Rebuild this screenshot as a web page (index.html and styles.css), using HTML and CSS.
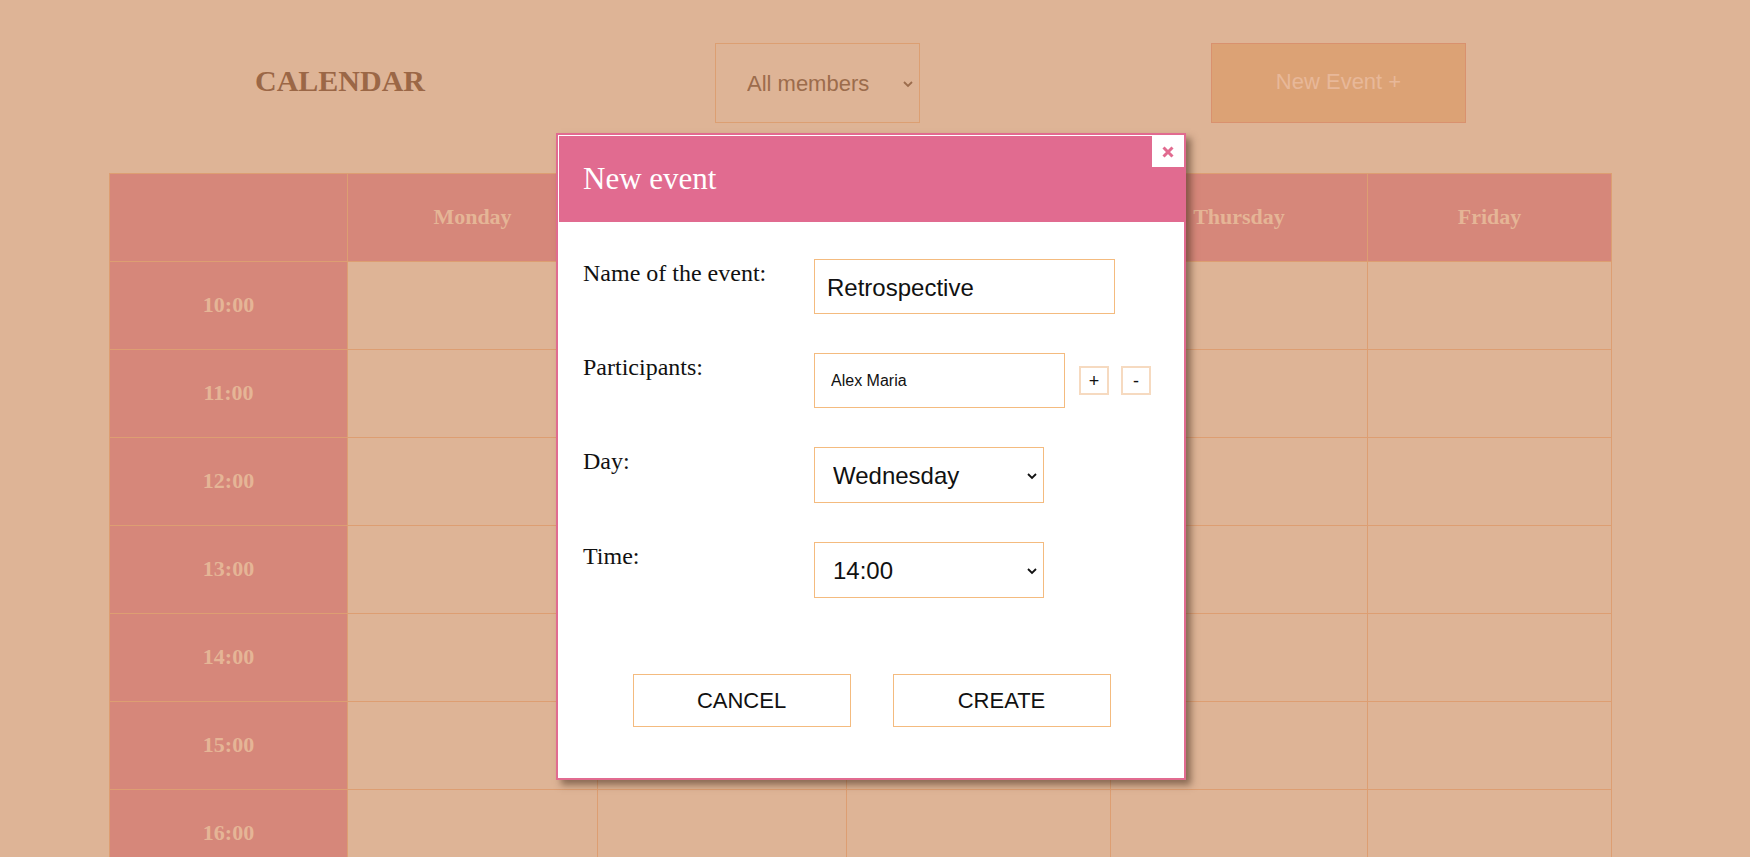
FILE: index.html
```html
<!DOCTYPE html>
<html lang="en">
<head>
<meta charset="utf-8">
<title>Calendar</title>
<link rel="stylesheet" href="styles.css">
</head>
<body>
<header class="topbar">
  <h1 class="title">CALENDAR</h1>
  <div class="select-wrap">
    <select class="member-select"><option>All members</option></select>
    <svg class="chevron chevron-brown" width="10" height="7" viewBox="0 0 10 7"><polyline points="1,1 5,5 9,1" fill="none" stroke="#9c6c4c" stroke-width="1.8"/></svg>
  </div>
  <button class="new-event-btn" type="button">New Event +</button>
</header>

<div class="calendar">
  <div class="cell head"></div>
  <div class="cell head">Monday</div>
  <div class="cell head">Tuesday</div>
  <div class="cell head">Wednesday</div>
  <div class="cell head">Thursday</div>
  <div class="cell head">Friday</div>

  <div class="cell time">10:00</div><div class="cell"></div><div class="cell"></div><div class="cell"></div><div class="cell"></div><div class="cell"></div>
  <div class="cell time">11:00</div><div class="cell"></div><div class="cell"></div><div class="cell"></div><div class="cell"></div><div class="cell"></div>
  <div class="cell time">12:00</div><div class="cell"></div><div class="cell"></div><div class="cell"></div><div class="cell"></div><div class="cell"></div>
  <div class="cell time">13:00</div><div class="cell"></div><div class="cell"></div><div class="cell"></div><div class="cell"></div><div class="cell"></div>
  <div class="cell time">14:00</div><div class="cell"></div><div class="cell"></div><div class="cell"></div><div class="cell"></div><div class="cell"></div>
  <div class="cell time">15:00</div><div class="cell"></div><div class="cell"></div><div class="cell"></div><div class="cell"></div><div class="cell"></div>
  <div class="cell time">16:00</div><div class="cell"></div><div class="cell"></div><div class="cell"></div><div class="cell"></div><div class="cell"></div>
</div>

<div class="modal">
  <button class="close-btn" type="button" aria-label="Close">
    <svg width="12" height="12" viewBox="0 0 12 12"><path d="M1.5 1.5 L10.5 10.5 M10.5 1.5 L1.5 10.5" stroke="#e16b90" stroke-width="3" stroke-linecap="butt"/></svg>
  </button>
  <div class="modal-header"><h2 class="modal-title">New event</h2></div>
  <form class="modal-body">
    <div class="fields">
      <label class="field-label">Name of the event:</label>
      <input class="text-input name-input" type="text" value="Retrospective">

      <label class="field-label">Participants:</label>
      <div class="participants">
        <input class="text-input part-input" type="text" value="Alex Maria">
        <button class="small-btn" type="button">+</button>
        <button class="small-btn" type="button">-</button>
      </div>

      <label class="field-label">Day:</label>
      <div class="select-wrap">
        <select class="modal-select"><option>Wednesday</option></select>
        <svg class="chevron chevron-dark" width="10" height="7" viewBox="0 0 10 7"><polyline points="1,1 5,5 9,1" fill="none" stroke="#111111" stroke-width="1.8"/></svg>
      </div>

      <label class="field-label">Time:</label>
      <div class="select-wrap">
        <select class="modal-select"><option>14:00</option></select>
        <svg class="chevron chevron-dark" width="10" height="7" viewBox="0 0 10 7"><polyline points="1,1 5,5 9,1" fill="none" stroke="#111111" stroke-width="1.8"/></svg>
      </div>
    </div>
    <div class="actions">
      <button class="action-btn" type="button">CANCEL</button>
      <button class="action-btn" type="button">CREATE</button>
    </div>
  </form>
</div>
</body>
</html>
```

FILE: styles.css
```css
html, body {
  margin: 0;
  padding: 0;
}
body {
  background: #deb496;
  font-family: "Liberation Serif", "Times New Roman", serif;
  height: 857px;
  overflow: hidden;
  position: relative;
}

.topbar {
  display: flex;
  align-items: center;
  gap: 291px;
  padding: 43px 0 0 255px;
  height: 80px;
}
.title {
  margin: 0 0 5px 0;
  width: 169px;
  font-family: "Liberation Serif", serif;
  font-weight: bold;
  font-size: 30px;
  color: #9b6746;
  white-space: nowrap;
  line-height: 1;
}

.select-wrap {
  position: relative;
  display: block;
  width: max-content;
}
.select-wrap select {
  -webkit-appearance: none;
  appearance: none;
  display: block;
}
.chevron {
  position: absolute;
  right: 7px;
  top: 50%;
  margin-top: -2px;
  pointer-events: none;
}

.member-select {
  width: 205px;
  height: 80px;
  box-sizing: border-box;
  background: #deb496;
  border: 1px solid #dc9f72;
  color: #9c6c4c;
  font-family: "Liberation Sans", Arial, sans-serif;
  font-size: 22px;
  padding: 0 24px 0 31px;
  border-radius: 0;
}
.new-event-btn {
  width: 255px;
  height: 80px;
  box-sizing: border-box;
  background: #dca275;
  border: 1px solid #d9916e;
  color: #e8b899;
  font-family: "Liberation Sans", Arial, sans-serif;
  font-size: 22px;
  padding: 0 0 2px 0;
}

.calendar {
  display: grid;
  grid-template-columns: 237px 249px 248px 263px 256px 243px;
  grid-auto-rows: 87px;
  gap: 1px;
  padding: 1px;
  background: #dd9e72;
  width: max-content;
  margin: 50px 0 0 109px;
}
.cell {
  background: #deb496;
}
.cell.head, .cell.time {
  background: #d6877a;
  color: #e5b596;
  font-weight: bold;
  font-size: 22px;
  display: flex;
  align-items: center;
  justify-content: center;
  box-sizing: border-box;
  padding-bottom: 2px;
}

.modal {
  position: absolute;
  left: 556px;
  top: 133px;
  width: 630px;
  height: 647px;
  box-sizing: border-box;
  border: 2px solid #e16b90;
  padding: 1px 0 0 1px;
  background: #ffffff;
  box-shadow: 5px 5px 7px rgba(70, 45, 30, 0.55);
}
.close-btn {
  position: absolute;
  top: 1px;
  right: 0;
  width: 32px;
  height: 31px;
  background: #ffffff;
  border: 0;
  padding: 0;
  display: flex;
  align-items: center;
  justify-content: center;
}
.close-btn svg {
  display: block;
}
.modal-header {
  background: #e16b90;
  height: 86px;
  box-sizing: border-box;
  padding: 25px 0 0 24px;
}
.modal-title {
  margin: 0;
  font-family: "Liberation Serif", serif;
  font-weight: normal;
  font-size: 31px;
  color: #ffffff;
  line-height: normal;
}

.modal-body {
  padding: 37px 0 0 24px;
  margin: 0;
}
.fields {
  display: grid;
  grid-template-columns: 231px auto;
  row-gap: 39px;
  align-items: start;
}
.field-label {
  font-family: "Liberation Serif", serif;
  font-size: 24px;
  color: #111111;
  line-height: normal;
  margin-top: 1px;
}
.text-input {
  box-sizing: border-box;
  height: 55px;
  border: 1px solid #f4bb7f;
  background: #ffffff;
  font-family: "Liberation Sans", Arial, sans-serif;
  color: #111111;
  outline: none;
  margin: 0;
  border-radius: 0;
}
.name-input {
  width: 301px;
  font-size: 24px;
  padding: 2px 12px 0 12px;
}
.participants {
  display: flex;
  align-items: center;
}
.part-input {
  width: 251px;
  font-size: 16px;
  padding: 0 16px;
}
.small-btn {
  width: 30px;
  height: 29px;
  box-sizing: border-box;
  border: 2px solid #f6dac0;
  background: #ffffff;
  font-family: "Liberation Sans", Arial, sans-serif;
  font-size: 18px;
  color: #111111;
  padding: 0;
  margin-left: 12px;
  line-height: 1;
}
.small-btn:first-of-type {
  margin-left: 14px;
}
.modal-select {
  width: 230px;
  height: 56px;
  box-sizing: border-box;
  border: 1px solid #f4bb7f;
  background: #ffffff;
  font-family: "Liberation Sans", Arial, sans-serif;
  font-size: 24px;
  color: #111111;
  padding: 0 24px 0 18px;
  border-radius: 0;
  margin: 0;
}

.actions {
  display: flex;
  justify-content: center;
  gap: 42px;
  margin-top: 76px;
  margin-left: -24px;
}
.action-btn {
  width: 218px;
  height: 53px;
  box-sizing: border-box;
  border: 1px solid #f4bb7f;
  background: #ffffff;
  font-family: "Liberation Sans", Arial, sans-serif;
  font-size: 22px;
  color: #111111;
  padding: 0;
}
```
